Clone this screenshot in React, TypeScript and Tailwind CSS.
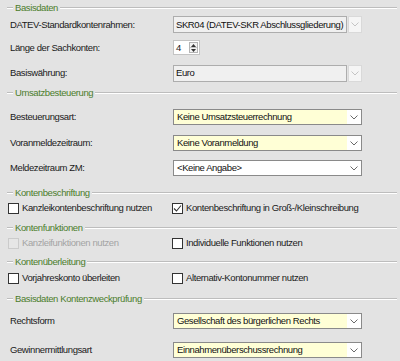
import React from "react";

const FONT = { fontFamily: '"Liberation Sans", Arial, sans-serif' };
const TXT = "text-[9.5px] tracking-[-0.4px] whitespace-nowrap";

function Chevron({ light }: { light?: boolean }) {
  return (
    <svg width="8" height="5" viewBox="0 0 8 5" className="block">
      <polyline points="0.5,0.5 4,4 7.5,0.5" fill="none" stroke={light ? "#c4c4c4" : "#6a6a6a"} strokeWidth="1" />
    </svg>
  );
}

function Header({ title, className = "" }: { title: string; className?: string }) {
  return (
    <div className={`flex items-center h-[16px] ${className}`}>
      <div className="ml-[7px] w-[6px] h-[2px] border-t border-[#bdbdbd] border-b-white border-b" />
      <span className={`px-[2px] text-[#4b7d2b] ${TXT}`}>{title}</span>
      <div className="flex-1 mr-[3px] h-[2px] border-t border-[#bdbdbd] border-b-white border-b" />
    </div>
  );
}

function Combo({ value, variant }: { value: string; variant: "disabled" | "yellow" | "white" }) {
  if (variant === "disabled") {
    return (
      <div className="flex w-[189px] h-[17px]">
        <div className={`flex-1 flex items-center bg-[#f0f0f0] border border-[#adadad] pl-[2px] text-[#111111] ${TXT}`}>
          {value}
        </div>
        <div className="w-[14px] flex items-center justify-center bg-[#f5f5f5] border border-[#d9d9d9] ml-[1px]">
          <Chevron light />
        </div>
      </div>
    );
  }
  return (
    <div className="flex w-[189px] h-[16px] border border-[#8a8a8a] bg-white">
      <div className={`flex-1 flex items-center pl-[3px] text-[#111111] ${TXT} ${variant === "yellow" ? "bg-[#ffffd6]" : "bg-white"}`}>
        {value}
      </div>
      <div className="w-[14px] flex items-center justify-center bg-white">
        <Chevron />
      </div>
    </div>
  );
}

function Row({ label, children, className = "" }: { label: string; children: React.ReactNode; className?: string }) {
  return (
    <div className={`flex items-center ${className}`}>
      <div className={`w-[173px] pl-[10px] text-[#1a1a1a] ${TXT}`}>{label}</div>
      {children}
    </div>
  );
}

function Check({ label, checked, disabled }: { label: string; checked?: boolean; disabled?: boolean }) {
  return (
    <div className="flex items-center gap-[3px]">
      <div
        className={`w-[11px] h-[11px] border flex items-center justify-center ${
          disabled ? "border-[#cbcbcb] bg-[#e6e6e6]" : "border-[#333333] bg-white"
        }`}
      >
        {checked && (
          <svg width="9" height="9" viewBox="0 0 9 9">
            <polyline points="1,4.5 3.5,7 8,1.5" fill="none" stroke="#333" strokeWidth="1.1" />
          </svg>
        )}
      </div>
      <span className={`${TXT} ${disabled ? "text-[#a3a3a3]" : "text-[#1a1a1a]"}`}>{label}</span>
    </div>
  );
}

function CheckRow({ children, className = "" }: { children: React.ReactNode; className?: string }) {
  const items = React.Children.toArray(children);
  return (
    <div className={`flex items-center h-[14px] ${className}`}>
      <div className="w-[172px] pl-[8px]">{items[0]}</div>
      <div>{items[1]}</div>
    </div>
  );
}

export default function App() {
  return (
    <div className="w-[400px] h-[361px] bg-[#e3e3e3] overflow-hidden flex flex-col leading-none" style={FONT}>
      <Header title="Basisdaten" />
      <Row label="DATEV-Standardkontenrahmen:" className="h-[17px]">
        <Combo value="SKR04 (DATEV-SKR Abschlussgliederung)" variant="disabled" />
      </Row>
      <Row label="Länge der Sachkonten:" className="h-[15px] mt-[7px]">
        <div className="flex w-[27px] h-[15px] border border-[#c4c4c4] bg-white p-[1px]">
          <div className={`flex-1 pl-[1px] flex items-center text-[#1a1a1a] ${TXT}`}>4</div>
          <div className="w-[9px] flex flex-col border border-[#b4b4b4] bg-[#f3f3f3]">
            <div className="flex-1 flex items-center justify-center border-b border-[#c4c4c4]">
              <svg width="5" height="3" viewBox="0 0 5 3"><polygon points="0,3 2.5,0 5,3" fill="#333" /></svg>
            </div>
            <div className="flex-1 flex items-center justify-center">
              <svg width="5" height="3" viewBox="0 0 5 3"><polygon points="0,0 2.5,3 5,0" fill="#333" /></svg>
            </div>
          </div>
        </div>
      </Row>
      <Row label="Basiswährung:" className="h-[16px] mt-[10px]">
        <Combo value="Euro" variant="disabled" />
      </Row>

      <Header title="Umsatzbesteuerung" className="mt-[4px]" />
      <Row label="Besteuerungsart:" className="h-[16px] mt-[8px]">
        <Combo value="Keine Umsatzsteuerrechnung" variant="yellow" />
      </Row>
      <Row label="Voranmeldezeitraum:" className="h-[16px] mt-[10px]">
        <Combo value="Keine Voranmeldung" variant="yellow" />
      </Row>
      <Row label="Meldezeitraum ZM:" className="h-[16px] mt-[9px]">
        <Combo value="<Keine Angabe>" variant="white" />
      </Row>

      <Header title="Kontenbeschriftung" className="mt-[9px]" />
      <CheckRow>
        <Check label="Kanzleikontenbeschriftung nutzen" />
        <Check label="Kontenbeschriftung in Groß-/Kleinschreibung" checked />
      </CheckRow>

      <Header title="Kontenfunktionen" className="mt-[5px]" />
      <CheckRow>
        <Check label="Kanzleifunktionen nutzen" disabled />
        <Check label="Individuelle Funktionen nutzen" />
      </CheckRow>

      <Header title="Kontenüberleitung" className="mt-[4px]" />
      <CheckRow className="mt-[1px]">
        <Check label="Vorjahreskonto überleiten" />
        <Check label="Alternativ-Kontonummer nutzen" />
      </CheckRow>

      <Header title="Basisdaten Kontenzweckprüfung" className="mt-[6px]" />
      <Row label="Rechtsform" className="h-[16px] mt-[6px]">
        <Combo value="Gesellschaft des bürgerlichen Rechts" variant="yellow" />
      </Row>
      <Row label="Gewinnermittlungsart" className="h-[16px] mt-[13px]">
        <Combo value="Einnahmenüberschussrechnung" variant="yellow" />
      </Row>
    </div>
  );
}
